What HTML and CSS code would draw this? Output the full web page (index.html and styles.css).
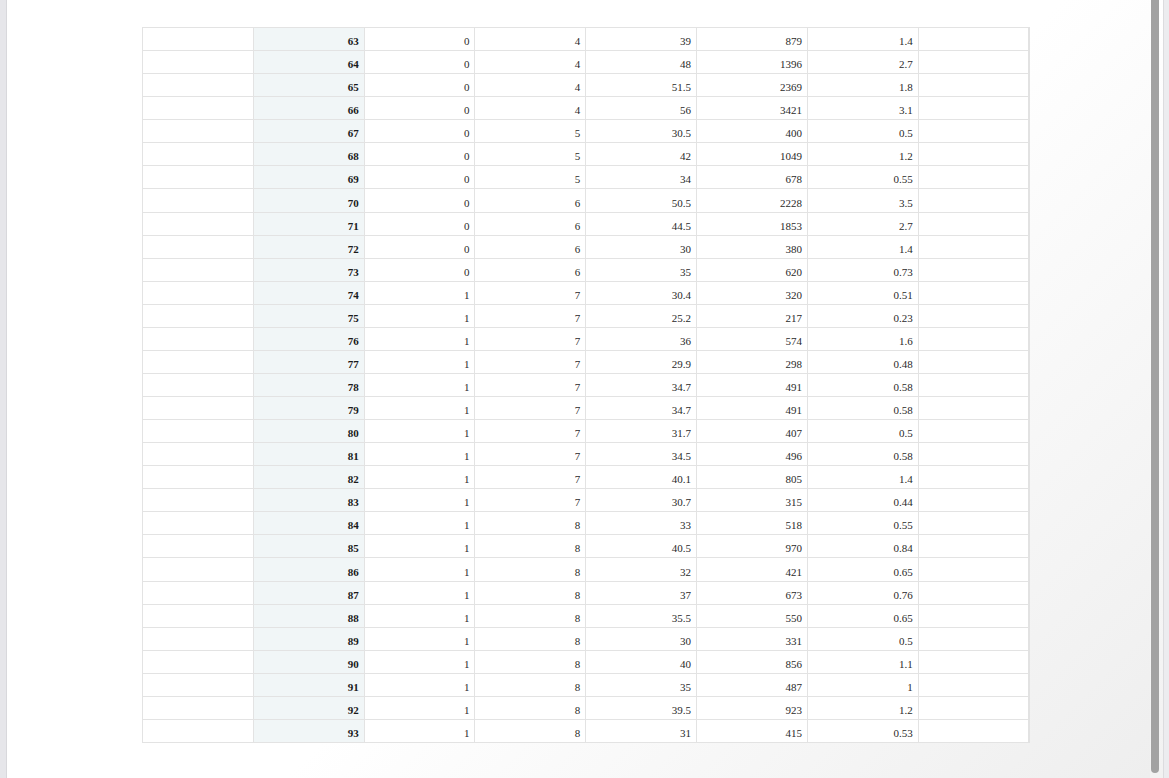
FILE: index.html
```html
<!DOCTYPE html>
<html>
<head>
<meta charset="utf-8">
<link rel="stylesheet" href="styles.css">
</head>
<body>
<div class="frame">
  <div class="edge"></div>
  <main class="content">
    <table class="grid">
      <tbody id="rows">
        <tr><td></td><th>63</th><td>0</td><td>4</td><td>39</td><td>879</td><td>1.4</td><td></td></tr>
        <tr><td></td><th>64</th><td>0</td><td>4</td><td>48</td><td>1396</td><td>2.7</td><td></td></tr>
        <tr><td></td><th>65</th><td>0</td><td>4</td><td>51.5</td><td>2369</td><td>1.8</td><td></td></tr>
        <tr><td></td><th>66</th><td>0</td><td>4</td><td>56</td><td>3421</td><td>3.1</td><td></td></tr>
        <tr><td></td><th>67</th><td>0</td><td>5</td><td>30.5</td><td>400</td><td>0.5</td><td></td></tr>
        <tr><td></td><th>68</th><td>0</td><td>5</td><td>42</td><td>1049</td><td>1.2</td><td></td></tr>
        <tr><td></td><th>69</th><td>0</td><td>5</td><td>34</td><td>678</td><td>0.55</td><td></td></tr>
        <tr><td></td><th>70</th><td>0</td><td>6</td><td>50.5</td><td>2228</td><td>3.5</td><td></td></tr>
        <tr><td></td><th>71</th><td>0</td><td>6</td><td>44.5</td><td>1853</td><td>2.7</td><td></td></tr>
        <tr><td></td><th>72</th><td>0</td><td>6</td><td>30</td><td>380</td><td>1.4</td><td></td></tr>
        <tr><td></td><th>73</th><td>0</td><td>6</td><td>35</td><td>620</td><td>0.73</td><td></td></tr>
        <tr><td></td><th>74</th><td>1</td><td>7</td><td>30.4</td><td>320</td><td>0.51</td><td></td></tr>
        <tr><td></td><th>75</th><td>1</td><td>7</td><td>25.2</td><td>217</td><td>0.23</td><td></td></tr>
        <tr><td></td><th>76</th><td>1</td><td>7</td><td>36</td><td>574</td><td>1.6</td><td></td></tr>
        <tr><td></td><th>77</th><td>1</td><td>7</td><td>29.9</td><td>298</td><td>0.48</td><td></td></tr>
        <tr><td></td><th>78</th><td>1</td><td>7</td><td>34.7</td><td>491</td><td>0.58</td><td></td></tr>
        <tr><td></td><th>79</th><td>1</td><td>7</td><td>34.7</td><td>491</td><td>0.58</td><td></td></tr>
        <tr><td></td><th>80</th><td>1</td><td>7</td><td>31.7</td><td>407</td><td>0.5</td><td></td></tr>
        <tr><td></td><th>81</th><td>1</td><td>7</td><td>34.5</td><td>496</td><td>0.58</td><td></td></tr>
        <tr><td></td><th>82</th><td>1</td><td>7</td><td>40.1</td><td>805</td><td>1.4</td><td></td></tr>
        <tr><td></td><th>83</th><td>1</td><td>7</td><td>30.7</td><td>315</td><td>0.44</td><td></td></tr>
        <tr><td></td><th>84</th><td>1</td><td>8</td><td>33</td><td>518</td><td>0.55</td><td></td></tr>
        <tr><td></td><th>85</th><td>1</td><td>8</td><td>40.5</td><td>970</td><td>0.84</td><td></td></tr>
        <tr><td></td><th>86</th><td>1</td><td>8</td><td>32</td><td>421</td><td>0.65</td><td></td></tr>
        <tr><td></td><th>87</th><td>1</td><td>8</td><td>37</td><td>673</td><td>0.76</td><td></td></tr>
        <tr><td></td><th>88</th><td>1</td><td>8</td><td>35.5</td><td>550</td><td>0.65</td><td></td></tr>
        <tr><td></td><th>89</th><td>1</td><td>8</td><td>30</td><td>331</td><td>0.5</td><td></td></tr>
        <tr><td></td><th>90</th><td>1</td><td>8</td><td>40</td><td>856</td><td>1.1</td><td></td></tr>
        <tr><td></td><th>91</th><td>1</td><td>8</td><td>35</td><td>487</td><td>1</td><td></td></tr>
        <tr><td></td><th>92</th><td>1</td><td>8</td><td>39.5</td><td>923</td><td>1.2</td><td></td></tr>
        <tr><td></td><th>93</th><td>1</td><td>8</td><td>31</td><td>415</td><td>0.53</td><td></td></tr>
      </tbody>
    </table>
  </main>
  <div class="scrollbar"><div class="thumb"></div></div>
  <div class="rail"></div>
</div>
</body>
</html>
```

FILE: styles.css
```css
html, body {
  margin: 0;
  padding: 0;
  height: 100%;
}
body {
  font-family: "Liberation Serif", "Times New Roman", serif;
  color: #2a2a2a;
  overflow: hidden;
}
.frame {
  display: flex;
  height: 778px;
  width: 1169px;
}
.edge {
  width: 6px;
  flex: none;
  background: #e6e6ea;
  border-right: 1px solid #d8d8dc;
}
.content {
  flex: 1;
  padding: 27px 0 0 135px;
  background: linear-gradient(135deg, #ffffff 0%, #ffffff 55%, #eeeeee 100%);
}
.grid {
  border-collapse: collapse;
  table-layout: fixed;
  width: 888px;
  font-size: 11px;
  background: #fff;
  border-right: 2px solid #e2e2e2;
}
.grid td, .grid th {
  height: 13.07px;
  padding: 7px 5px 2px 5px;
  line-height: 13px;
  border: 1px solid #e3e3e3;
  text-align: right;
  vertical-align: bottom;
  box-sizing: content-box;
}
.grid th {
  font-weight: bold;
  background: #f1f6f7;
  color: #1a1a1a;
}
.scrollbar {
  width: 13px;
  flex: none;
  display: flex;
  justify-content: flex-start;
  background: linear-gradient(180deg, #ffffff 0%, #f2f2f2 100%);
}
.thumb {
  width: 8px;
  height: 773px;
  margin-left: 1px;
  background: #a2a2a2;
  border-radius: 0 0 4px 4px;
}
.rail {
  width: 5px;
  flex: none;
  background: #ececef;
  border-left: 1px solid #dcdcdf;
}
```
